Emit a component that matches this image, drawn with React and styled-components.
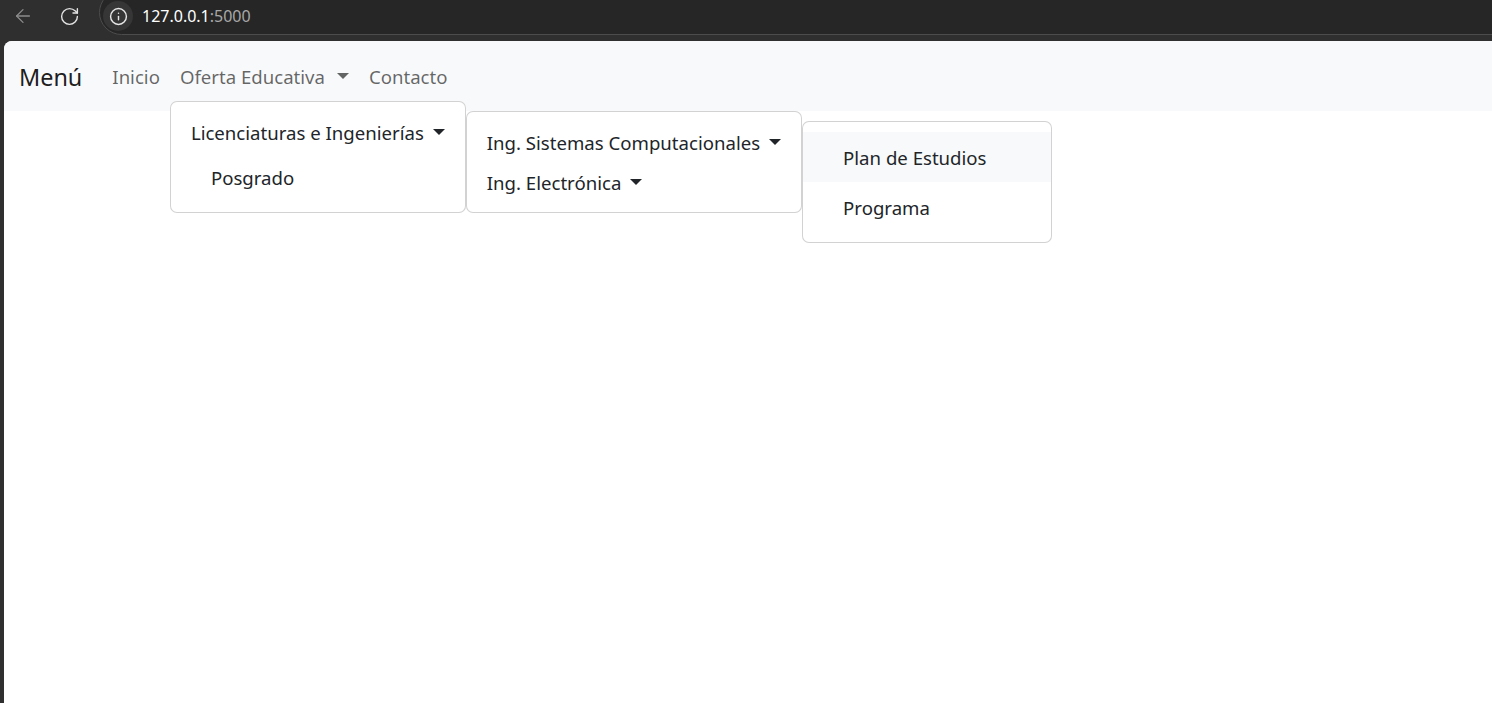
import styled, { createGlobalStyle } from 'styled-components';
import { ArrowLeft, RotateCw, Info } from 'lucide-react';

const GlobalStyle = createGlobalStyle`
  html, body {
    margin: 0;
    height: 100%;
  }
  body {
    background: #2f2f2f;
    font-family: 'Noto Sans', 'Open Sans', sans-serif;
    overflow: hidden;
  }
  #root {
    height: 100%;
  }
  * {
    box-sizing: border-box;
  }
`;

const menus = {
  oferta: [
    { label: 'Licenciaturas e Ingenierías', caret: true, sub: 'carreras' },
    { label: 'Posgrado', leaf: true },
  ],
  carreras: [
    { label: 'Ing. Sistemas Computacionales', caret: true, sub: 'sistemas' },
    { label: 'Ing. Electrónica', caret: true },
  ],
  sistemas: [
    { label: 'Plan de Estudios', leaf: true, active: true },
    { label: 'Programa', leaf: true },
  ],
};

function Dropdown({ name, nested }) {
  return (
    <Menu $nested={nested}>
      {menus[name].map((item) => (
        <MenuItem key={item.label}>
          <MenuLink href="#" $leaf={item.leaf} $active={item.active}>
            {item.label}
            {item.caret && <Caret $gap={9} />}
          </MenuLink>
          {item.sub && <Dropdown name={item.sub} nested />}
        </MenuItem>
      ))}
    </Menu>
  );
}

export default function App() {
  return (
    <Window>
      <GlobalStyle />
      <BrowserBar>
        <ToolButton $dim>
          <ArrowLeft size={22} strokeWidth={1.4} />
        </ToolButton>
        <ToolButton>
          <RotateCw size={21} strokeWidth={1.6} />
        </ToolButton>
        <UrlBar>
          <InfoChip>
            <Info size={19} strokeWidth={1.8} />
          </InfoChip>
          <UrlText>
            127.0.0.1<span>:5000</span>
          </UrlText>
        </UrlBar>
      </BrowserBar>
      <Page>
        <Navbar>
          <Brand href="#">Menú</Brand>
          <NavList>
            <NavItem>
              <NavLink href="#">Inicio</NavLink>
            </NavItem>
            <NavItem>
              <NavLink href="#">
                Oferta Educativa
                <Caret $gap={12} />
              </NavLink>
              <Dropdown name="oferta" />
            </NavItem>
            <NavItem>
              <NavLink href="#">Contacto</NavLink>
            </NavItem>
          </NavList>
        </Navbar>
      </Page>
    </Window>
  );
}

const Window = styled.div`
  height: 100vh;
  display: flex;
  flex-direction: column;
`;

const BrowserBar = styled.div`
  height: 41px;
  flex-shrink: 0;
  display: flex;
  align-items: flex-start;
  padding-left: 5px;
  gap: 10px;
  overflow: hidden;
`;

const ToolButton = styled.div`
  width: 36px;
  height: 32px;
  display: flex;
  align-items: center;
  justify-content: center;
  color: ${(p) => (p.$dim ? '#8c8c8c' : '#e3e3e3')};
`;

const UrlBar = styled.div`
  flex: 1;
  margin-top: -10px;
  margin-left: 2px;
  margin-right: -30px;
  height: 45px;
  border: 1px solid #4c4c4c;
  border-radius: 23px;
  background: #262626;
  display: flex;
  align-items: flex-end;
  padding: 0 0 3px 3px;
`;

const InfoChip = styled.div`
  width: 30px;
  height: 30px;
  border-radius: 50%;
  background: #363636;
  color: #e6e6e6;
  display: flex;
  align-items: center;
  justify-content: center;
`;

const UrlText = styled.div`
  margin-left: 9px;
  height: 30px;
  line-height: 30px;
  font-size: 16px;
  color: #ffffff;

  span {
    color: #a8a8a8;
  }
`;

const Page = styled.div`
  flex: 1;
  margin-left: 4px;
  background: #ffffff;
  border-top-left-radius: 8px;
  overflow: hidden;
`;

const Navbar = styled.nav`
  height: 70px;
  background: #f8f9fa;
  padding: 0 15px;
  display: flex;
  align-items: center;
`;

const Brand = styled.a`
  font-size: 23.4px;
  line-height: 1.5;
  color: rgba(0, 0, 0, 0.9);
  text-decoration: none;
  margin-right: 20px;
  padding-top: 3px;
`;

const NavList = styled.ul`
  display: flex;
  list-style: none;
  margin: 0;
  padding: 0;
`;

const NavItem = styled.li`
  position: relative;
`;

const NavLink = styled.a`
  display: block;
  padding: 11px 10px 9px;
  font-size: 18.6px;
  line-height: 30px;
  color: rgba(0, 0, 0, 0.6);
  text-decoration: none;
  white-space: nowrap;
`;

const Caret = styled.span`
  display: inline-block;
  margin-left: ${(p) => p.$gap}px;
  vertical-align: 0.27em;
  border-top: 6px solid;
  border-right: 6px solid transparent;
  border-left: 6px solid transparent;
  border-bottom: 0;
`;

const Menu = styled.ul`
  position: absolute;
  top: ${(p) => (p.$nested ? '-1px' : '100%')};
  left: ${(p) => (p.$nested ? 'calc(100% + 1px)' : '0')};
  z-index: 10;
  min-width: 250px;
  margin: 0;
  padding: 10px 0;
  list-style: none;
  background: #ffffff;
  border: 1px solid rgba(0, 0, 0, 0.175);
  border-radius: 7px;
`;

const MenuItem = styled.li`
  position: relative;
`;

const MenuLink = styled.a`
  display: block;
  white-space: nowrap;
  font-size: 18.6px;
  line-height: 30px;
  color: #212529;
  text-decoration: none;
  padding: ${(p) => (p.$leaf ? '11px 40px 9px' : '6px 20px 4px')};
  background: ${(p) => (p.$active ? '#f8f9fa' : 'transparent')};
`;
